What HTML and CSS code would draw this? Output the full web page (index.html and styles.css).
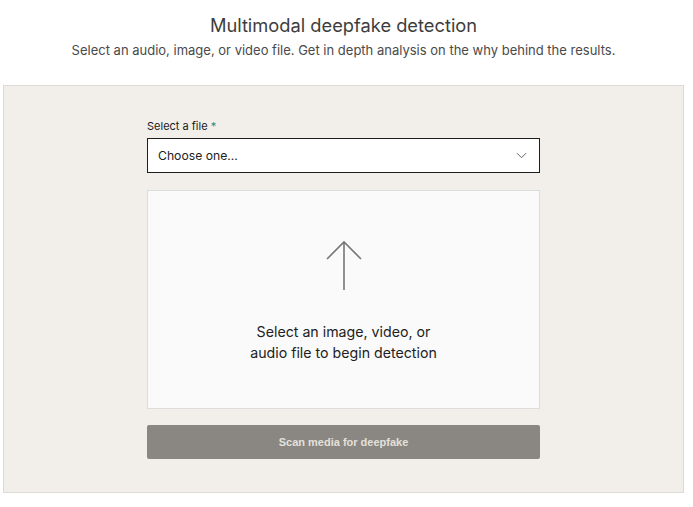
FILE: index.html
```html
<!DOCTYPE html>
<html lang="en">
<head>
    <meta charset="UTF-8">
    <meta name="viewport" content="width=device-width, initial-scale=1.0">
    <title>Multimodal deepfake detection</title>
    <link rel="stylesheet" href="styles.css">
</head>
<body>
    <div class="header">
        <h1>Multimodal deepfake detection</h1>
        <p>Select an audio, image, or video file. Get in depth analysis on the why behind the results.</p>
    </div>

    <div class="panel">
        <form class="upload-form">
            <label class="field-label" for="file-type">Select a file <span class="required">*</span></label>
            <div class="select-wrap">
                <select id="file-type">
                    <option>Choose one...</option>
                    <option>Image</option>
                    <option>Video</option>
                    <option>Audio</option>
                </select>
                <svg class="chevron" width="11" height="7" viewBox="0 0 11 7">
                    <path d="M1 1.2 L5.5 5.7 L10 1.2" fill="none" stroke="#666" stroke-width="1"/>
                </svg>
            </div>

            <div class="dropzone">
                <svg class="arrow" width="38" height="52" viewBox="0 0 38 52">
                    <path d="M19 50 V2 M2 19 L19 2 L36 19" fill="none" stroke="#777" stroke-width="1.6"/>
                </svg>
                <p>Select an image, video, or<br>audio file to begin detection</p>
            </div>

            <button type="button" class="scan-btn" disabled>Scan media for deepfake</button>
        </form>
    </div>
</body>
</html>
```

FILE: styles.css
```css
body {
    font-family: Inter, "Noto Sans", sans-serif;
    margin: 0;
    padding: 0 9px 0 3px;
    background: white;
    color: #222;
}
.header {
    text-align: center;
    padding-top: 13px;
    height: 72px;
}
.header h1 {
    font-size: 18.3px;
    font-weight: 400;
    color: #3d3d3d;
    margin: 0 0 5px;
    line-height: 24px;
}
.header p {
    font-size: 13px;
    color: #4a4a4a;
    margin: 0;
    line-height: 16px;
}
.panel {
    background: #f2efeb;
    border: 1px solid #dedbd7;
    box-sizing: border-box;
    height: 408px;
    padding-top: 33px;
}
.upload-form {
    width: 393px;
    margin: 0 0 0 143px;
}
.field-label {
    display: block;
    font-size: 11px;
    color: #1a1a1a;
    margin-bottom: 5px;
    line-height: 14px;
}
.required {
    color: #2a8c78;
}
.select-wrap {
    position: relative;
    margin-bottom: 17px;
}
select {
    appearance: none;
    width: 100%;
    height: 35px;
    border: 1px solid #1e1e1e;
    border-radius: 0;
    background: white;
    font-family: inherit;
    font-size: 12.2px;
    color: #222;
    padding: 0 10px;
}
.chevron {
    position: absolute;
    right: 13px;
    top: 14px;
    pointer-events: none;
}
.dropzone {
    background: #fafafa;
    border: 1px solid #dcdcdc;
    height: 219px;
    box-sizing: border-box;
    text-align: center;
    padding-top: 49px;
    margin-bottom: 16px;
}
.arrow {
    display: block;
    margin: 0 auto;
}
.dropzone p {
    margin: 29px 0 0;
    font-size: 14.2px;
    line-height: 21px;
    color: #222;
}
.scan-btn {
    display: block;
    width: 100%;
    height: 34px;
    border: none;
    border-radius: 2px;
    background: #8a8782;
    color: #e4e0da;
    font-family: "Liberation Sans", Arial, sans-serif;
    font-weight: bold;
    font-size: 11px;
}
```
